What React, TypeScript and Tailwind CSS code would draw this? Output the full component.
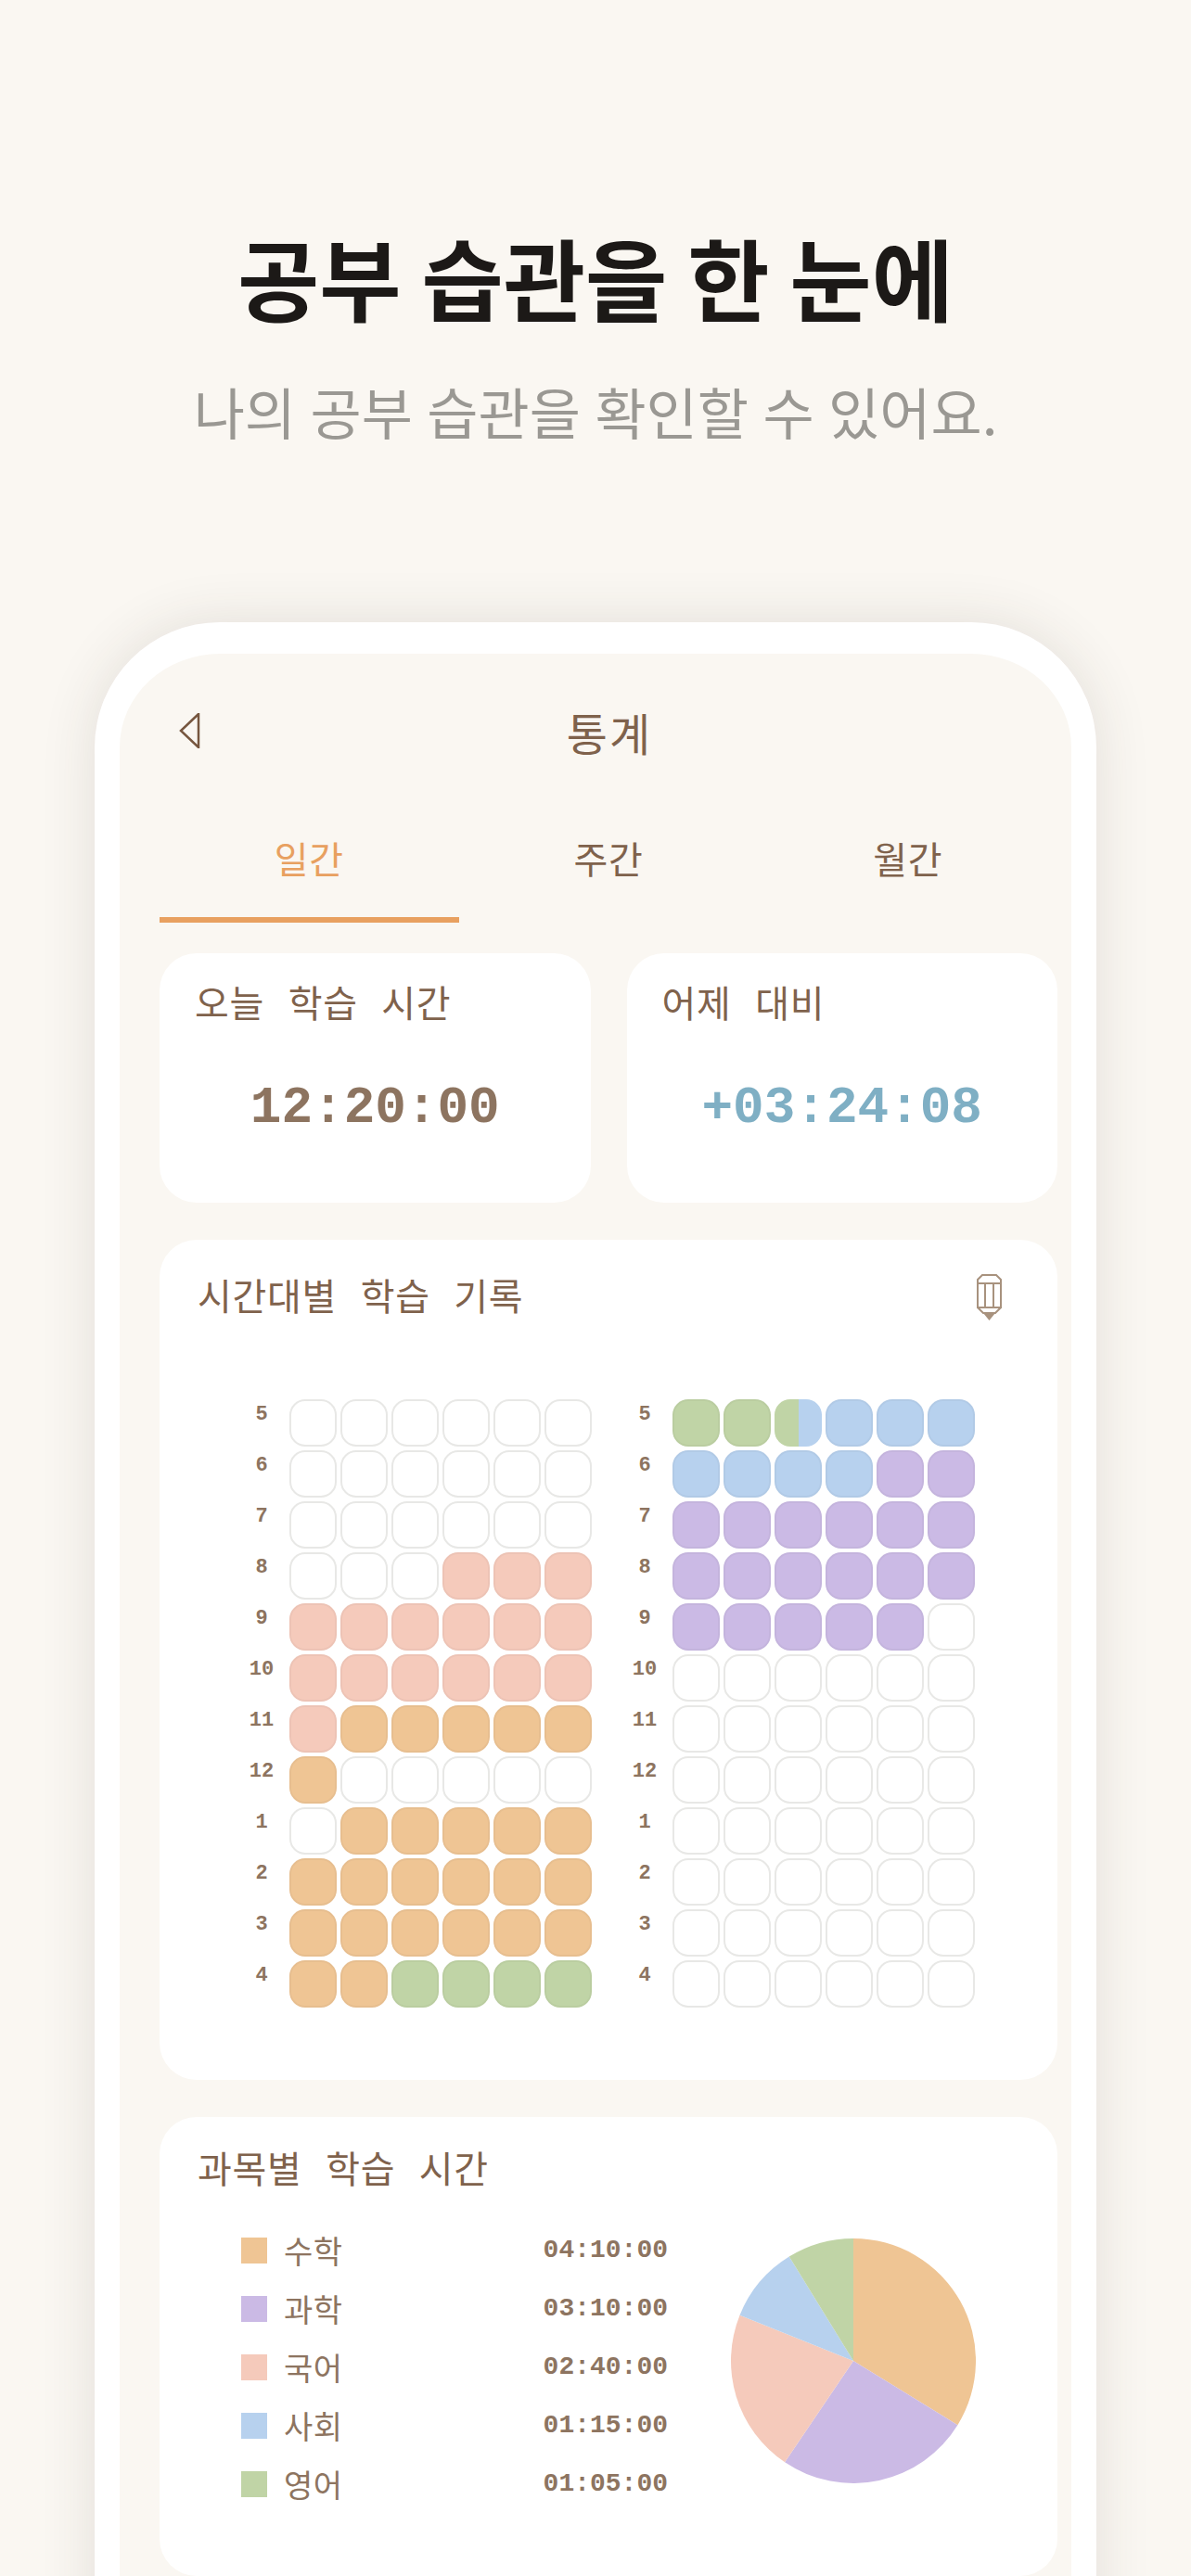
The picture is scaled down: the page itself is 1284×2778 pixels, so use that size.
const KR = "font-['Noto_Sans_CJK_KR','Noto_Sans',sans-serif]";

const COLORS: Record<string, string> = {
  o: "#EFC594",
  p: "#CBBAE5",
  r: "#F5CABB",
  b: "#B7D1EE",
  g: "#C0D4A6",
};

const HOURS = ["5", "6", "7", "8", "9", "10", "11", "12", "1", "2", "3", "4"];

const AM = [
  "......",
  "......",
  "......",
  "...rrr",
  "rrrrrr",
  "rrrrrr",
  "rooooo",
  "o.....",
  ".ooooo",
  "oooooo",
  "oooooo",
  "oogggg",
];

const PM = [
  "ggxbbb",
  "bbbbpp",
  "pppppp",
  "pppppp",
  "ppppp.",
  "......",
  "......",
  "......",
  "......",
  "......",
  "......",
  "......",
];

const SUBJECTS = [
  { name: "수학", time: "04:10:00", secs: 250, color: "#EFC594" },
  { name: "과학", time: "03:10:00", secs: 190, color: "#CBBAE5" },
  { name: "국어", time: "02:40:00", secs: 160, color: "#F5CABB" },
  { name: "사회", time: "01:15:00", secs: 75, color: "#B7D1EE" },
  { name: "영어", time: "01:05:00", secs: 65, color: "#C0D4A6" },
];

function Cell({ v }: { v: string }) {
  if (v === ".") {
    return <div className="w-[51px] h-[51px] rounded-[17px] border-2 border-[#e8e8e6] bg-white" />;
  }
  if (v === "x") {
    return (
      <div className="w-[51px] h-[51px] rounded-[17px] overflow-hidden flex">
        <div className="flex-1 bg-[#C0D4A6]" />
        <div className="flex-1 bg-[#B7D1EE]" />
      </div>
    );
  }
  return <div className="w-[51px] h-[51px] rounded-[17px] border-2 border-black/3" style={{ background: COLORS[v] }} />;
}

function TimeGrid({ rows }: { rows: string[] }) {
  return (
    <div className="flex flex-col gap-[4px]">
      {rows.map((row, i) => (
        <div key={i} className="flex items-start">
          <span className="w-[60px] pt-[5px] text-center font-['Liberation_Mono',monospace] font-bold text-[22px] leading-[24px] text-[#8D7460]">
            {HOURS[i]}
          </span>
          <div className="flex gap-[4px]">
            {row.split("").map((v, j) => (
              <Cell key={j} v={v} />
            ))}
          </div>
        </div>
      ))}
    </div>
  );
}

function Pie() {
  const total = SUBJECTS.reduce((s, x) => s + x.secs, 0);
  const r = 132;
  let angle = 0;
  return (
    <svg width="264" height="264" viewBox="-132 -132 264 264">
      {SUBJECTS.map((s) => {
        const a0 = (angle / total) * Math.PI * 2;
        angle += s.secs;
        const a1 = (angle / total) * Math.PI * 2;
        const large = a1 - a0 > Math.PI ? 1 : 0;
        const d = `M0 0L${r * Math.sin(a0)} ${-r * Math.cos(a0)}A${r} ${r} 0 ${large} 1 ${r * Math.sin(a1)} ${-r * Math.cos(a1)}Z`;
        return <path key={s.name} d={d} fill={s.color} />;
      })}
    </svg>
  );
}

function StatCard({ label, value, color }: { label: string; value: string; color: string }) {
  return (
    <div className="h-[269px] bg-white rounded-[40px] pt-[27px] px-[38px]">
      <div className="text-[40px] leading-[50px] font-normal tracking-[0.7px] text-[#7F624C] [word-spacing:16px]">{label}</div>
      <div
        className="mt-[60px] text-center font-['Liberation_Mono',monospace] font-bold text-[56px] leading-[60px]"
        style={{ color }}
      >
        {value}
      </div>
    </div>
  );
}

export default function App() {
  return (
    <div className={`h-[2778px] overflow-hidden bg-[#FAF7F2] flex flex-col items-center ${KR}`}>
      {/* Headline */}
      <h1 className="mt-[233px] text-[96px] leading-[130px] font-bold text-[#1C1917]">
        공부 습관을 한 눈에
      </h1>
      <p className="mt-[35px] text-[60px] leading-[90px] font-normal text-[#9A9893] [word-spacing:2px]">
        나의 공부 습관을 확인할 수 있어요.
      </p>

      {/* Phone frame */}
      <div className="mt-[183px] w-[1080px] h-[2400px] shrink-0 bg-[#FAF7F2] border-white border-x-[27px] border-t-[34px] rounded-t-[135px] shadow-[0_0_60px_rgba(60,50,40,0.12)] pl-[43px] pr-[15px] text-[#7F624C]">
        {/* Nav bar */}
        <div className="relative h-[168px] flex items-center justify-center">
          <svg className="absolute left-[21px] top-[64px]" width="24" height="38" viewBox="0 0 24 38" fill="none" stroke="#76563F" strokeWidth="2.5">
            <path d="M21 1 L2 19 L21 37 Z" />
          </svg>
          <span className="ml-[2px] text-[48px] leading-[60px] font-normal tracking-[2px]">통계</span>
        </div>

        {/* Tabs */}
        <div className="grid grid-cols-3 h-[122px]">
          <div className="border-b-[6px] border-[#E8A060] text-center text-[#E8A060] text-[40px] leading-[56px] font-normal tracking-[0.7px] pt-[24px]">
            일간
          </div>
          <div className="text-center text-[40px] leading-[56px] font-normal tracking-[0.7px] pt-[24px]">주간</div>
          <div className="text-center text-[40px] leading-[56px] font-normal tracking-[0.7px] pt-[24px]">월간</div>
        </div>

        {/* Today / yesterday */}
        <div className="mt-[33px] grid grid-cols-2 gap-[39px]">
          <StatCard label="오늘 학습 시간" value="12:20:00" color="#8D7460" />
          <StatCard label="어제 대비" value="+03:24:08" color="#7FAFC4" />
        </div>

        {/* Time table */}
        <div className="mt-[40px] h-[906px] bg-white rounded-[40px] pt-[34px] px-[41px]">
          <div className="flex items-start justify-between">
            <span className="text-[40px] leading-[50px] font-normal tracking-[0.7px] [word-spacing:16px]">시간대별 학습 기록</span>
            <svg className="mr-[19px] mt-[2px]" width="27" height="51" viewBox="0 0 27 51" fill="none" stroke="#A8927E" strokeWidth="2">
              <path d="M6 2H21L26 7V37H1V7Z" />
              <path d="M1 11H26M9 11V37M18 11V37" />
              <path d="M1 37L7 43H20L26 37" />
              <path d="M7 43H20L13.5 51Z" fill="#A8927E" stroke="none" />
            </svg>
          </div>
          <div className="mt-[85px] ml-[39px] flex gap-[27px]">
            <TimeGrid rows={AM} />
            <TimeGrid rows={PM} />
          </div>
        </div>

        {/* Subject totals */}
        <div className="mt-[40px] h-[495px] bg-white rounded-[40px] pt-[29px] px-[41px]">
          <div className="text-[40px] leading-[50px] font-normal tracking-[0.7px] [word-spacing:16px]">과목별 학습 시간</div>
          <div className="mt-[51px] flex items-start">
            <div className="ml-[47px] w-[460px] flex flex-col gap-[35px]">
              {SUBJECTS.map((s) => (
                <div key={s.name} className="flex items-center h-[28px]">
                  <div className="w-[28px] h-[28px]" style={{ background: s.color }} />
                  <span className="ml-[18px] text-[34px] leading-[40px] font-normal tracking-[0.5px] text-[#8D7460]">{s.name}</span>
                  <span className="ml-auto font-['Liberation_Mono',monospace] font-bold text-[28px] leading-[32px] text-[#8D7460]">
                    {s.time}
                  </span>
                </div>
              ))}
            </div>
            <div className="ml-[68px] mt-[1px]">
              <Pie />
            </div>
          </div>
        </div>
      </div>
    </div>
  );
}
